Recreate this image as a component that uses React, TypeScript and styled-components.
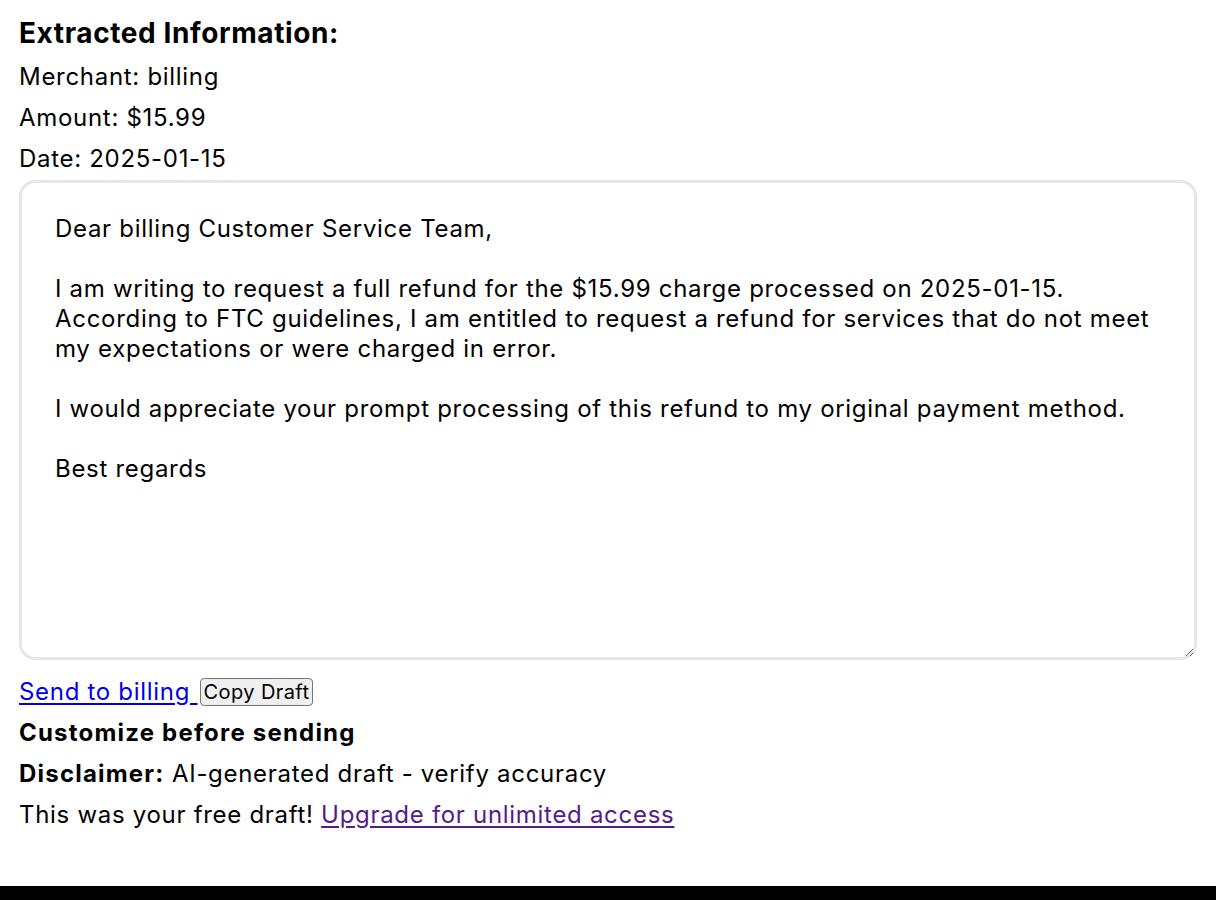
import React from "react";
import styled, { createGlobalStyle } from "styled-components";

const GlobalStyle = createGlobalStyle`
  body {
    margin: 0;
    background: #ffffff;
    color: #000000;
    font-family: Inter, "Noto Sans", "Liberation Sans", sans-serif;
    letter-spacing: 0.7px;
  }
  strong {
    letter-spacing: 1.2px;
  }
`;

const Page = styled.div`
  padding: 0 19px;
  display: flex;
  flex-direction: column;
`;

const Heading = styled.h3`
  margin: 16px 0 12px;
  font-size: 28px;
  line-height: 34px;
  font-weight: 700;
  letter-spacing: 0.6px;
`;

const InfoList = styled.div`
  display: flex;
  flex-direction: column;
  gap: 12px;
  margin-bottom: 7px;
`;

const Line = styled.p<{ bold?: boolean }>`
  margin: 0;
  font-size: 24px;
  line-height: 29px;
  font-weight: ${({ bold }) => (bold ? 700 : 400)};
  letter-spacing: ${({ bold }) => (bold ? "1.2px" : "0.7px")};
`;

const DraftBox = styled.textarea`
  box-sizing: border-box;
  width: 100%;
  height: 480px;
  padding: 31px 33px;
  border: 3px solid #e5e5ea;
  border-radius: 16px;
  font-family: inherit;
  font-size: 24px;
  line-height: 30px;
  letter-spacing: 0.7px;
  color: #000000;
  background: #ffffff;
  outline: none;
`;

const Footer = styled.div`
  display: flex;
  flex-direction: column;
  gap: 12px;
  margin-top: 17px;
`;

const Actions = styled.div`
  font-size: 24px;
  line-height: 29px;
`;

const Link = styled.a<{ visited?: boolean }>`
  color: ${({ visited }) => (visited ? "#551a8b" : "#0000ee")};
  text-decoration: underline;
  text-underline-offset: 3px;
`;

const CopyButton = styled.button`
  box-sizing: border-box;
  height: 28px;
  padding: 0 3px;
  margin-left: 2px;
  vertical-align: 1px;
  font-family: inherit;
  font-size: 20px;
  line-height: 24px;
  letter-spacing: 0.4px;
  color: #000000;
  background: #efefef;
  border: 1.5px solid #767676;
  border-radius: 4px;
`;

const BlackBar = styled.div`
  height: 40px;
  margin-top: 57px;
  background: #000000;
`;

const draft = `Dear billing Customer Service Team,

I am writing to request a full refund for the $15.99 charge processed on 2025-01-15. According to FTC guidelines, I am entitled to request a refund for services that do not meet my expectations or were charged in error.

I would appreciate your prompt processing of this refund to my original payment method.

Best regards`;

export default function App() {
  return (
    <>
      <GlobalStyle />
      <Page>
        <Heading>Extracted Information:</Heading>
        <InfoList>
          <Line>Merchant: billing</Line>
          <Line>Amount: $15.99</Line>
          <Line>Date: 2025-01-15</Line>
        </InfoList>
        <DraftBox defaultValue={draft} />
        <Footer>
          <Actions>
            <Link href="#send">Send to billing </Link>
            <CopyButton>Copy Draft</CopyButton>
          </Actions>
          <Line bold>Customize before sending</Line>
          <Line>
            <strong>Disclaimer:</strong> AI-generated draft - verify accuracy
          </Line>
          <Line>
            This was your free draft! <Link href="#upgrade" visited>Upgrade for unlimited access</Link>
          </Line>
        </Footer>
      </Page>
      <BlackBar />
    </>
  );
}
